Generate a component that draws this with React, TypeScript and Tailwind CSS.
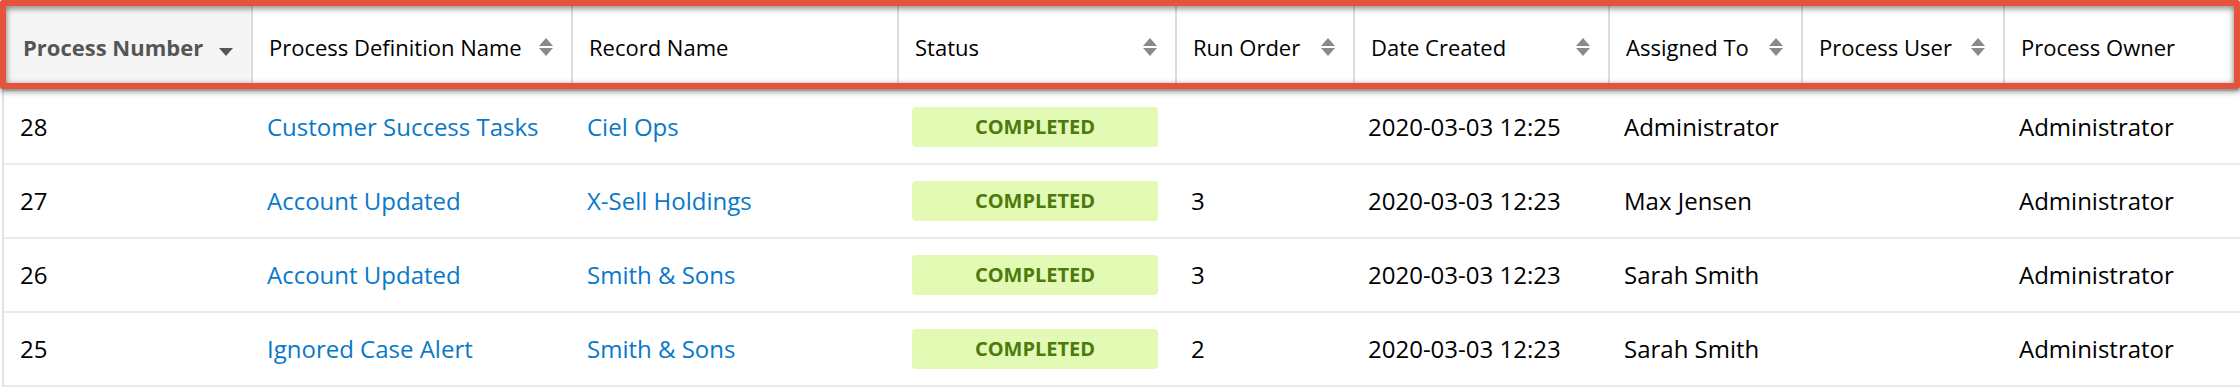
import React from "react";

type Sort = "none" | "both" | "desc";

const columns: { label: string; sort: Sort; active?: boolean }[] = [
  { label: "Process Number", sort: "desc", active: true },
  { label: "Process Definition Name", sort: "both" },
  { label: "Record Name", sort: "none" },
  { label: "Status", sort: "both" },
  { label: "Run Order", sort: "both" },
  { label: "Date Created", sort: "both" },
  { label: "Assigned To", sort: "both" },
  { label: "Process User", sort: "both" },
  { label: "Process Owner", sort: "none" },
];

const rows = [
  { num: "28", def: "Customer Success Tasks", record: "Ciel Ops", order: "", date: "2020-03-03 12:25", assigned: "Administrator", owner: "Administrator" },
  { num: "27", def: "Account Updated", record: "X-Sell Holdings", order: "3", date: "2020-03-03 12:23", assigned: "Max Jensen", owner: "Administrator" },
  { num: "26", def: "Account Updated", record: "Smith & Sons", order: "3", date: "2020-03-03 12:23", assigned: "Sarah Smith", owner: "Administrator" },
  { num: "25", def: "Ignored Case Alert", record: "Smith & Sons", order: "2", date: "2020-03-03 12:23", assigned: "Sarah Smith", owner: "Administrator" },
];

const grid = "grid grid-cols-[247px_320px_326px_278px_178px_255px_193px_202px_1fr]";

function SortIcon({ sort }: { sort: Sort }) {
  if (sort === "none") return null;
  if (sort === "desc") {
    return (
      <svg width="16" height="20" viewBox="0 0 16 20" className="shrink-0 text-[#555]">
        <path d="M1 11 L15 11 L8 19 Z" fill="currentColor" />
      </svg>
    );
  }
  return (
    <svg width="16" height="20" viewBox="0 0 16 20" className="shrink-0 text-[#8a8a8a]">
      <path d="M1 9 L8 1 L15 9 Z" fill="currentColor" />
      <path d="M1 11 L15 11 L8 19 Z" fill="currentColor" />
    </svg>
  );
}

export default function App() {
  return (
    <div className="relative w-[2240px] h-[390px] bg-white overflow-hidden font-['Open_Sans',sans-serif]">
      <div className="ml-[2px] border-l-2 border-[#e2e2e2]">
        {/* header */}
        <div className={`${grid} h-[91px] border-b-2 border-[#dfe3e7]`}>
          {columns.map((col, i) => (
            <div
              key={col.label}
              className={`flex items-center justify-between pt-[5px] pr-[17px] text-[22px] ${
                i === 0 ? "pl-[19px] bg-[#f5f5f5] font-bold text-[#555]" : "pl-4 border-l-2 border-[#d8dde3] text-black"
              }`}
            >
              <span className="whitespace-nowrap">{col.label}</span>
              <SortIcon sort={col.sort} />
            </div>
          ))}
        </div>

        {/* rows */}
        {rows.map((r) => (
          <div key={r.num} className={`${grid} h-[74px] border-b-2 border-[#ebebeb] text-[24px] text-black`}>
            <div className="flex items-center pl-4">{r.num}</div>
            <div className="flex items-center pl-4 text-[#0a78c8] whitespace-nowrap">{r.def}</div>
            <div className="flex items-center pl-4 text-[#0a78c8] whitespace-nowrap">{r.record}</div>
            <div className="flex items-center pl-[15px] pr-[17px]">
              <span className="flex w-full h-10 items-center justify-center rounded-[4px] bg-[#e2fab4] text-[20px] font-bold text-[#4c7a0c]">
                COMPLETED
              </span>
            </div>
            <div className="flex items-center pl-4">{r.order}</div>
            <div className="flex items-center pl-[15px] whitespace-nowrap">{r.date}</div>
            <div className="flex items-center pl-4 whitespace-nowrap">{r.assigned}</div>
            <div className="flex items-center pl-4"></div>
            <div className="flex items-center pl-4 whitespace-nowrap">{r.owner}</div>
          </div>
        ))}
      </div>

      {/* highlight frame over header */}
      <div className="absolute left-0 top-0 w-[2240px] h-[89px] rounded-[3px] border-[6px] border-[#e6533c] drop-shadow-[0_2px_3px_rgba(0,0,0,0.55)]" />
    </div>
  );
}
